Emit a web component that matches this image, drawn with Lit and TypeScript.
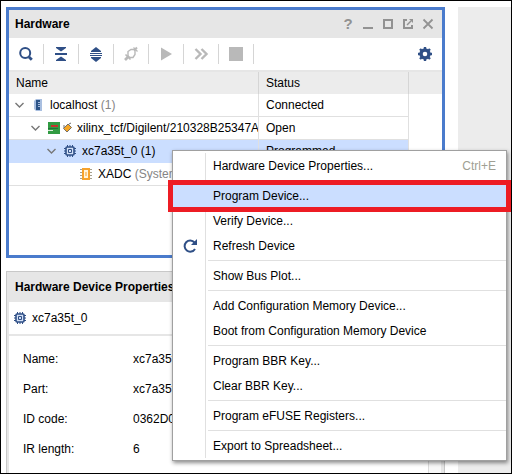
import { LitElement, html, css, svg, nothing } from "lit";
import { customElement } from "lit/decorators.js";
import { classMap } from "lit/directives/class-map.js";

const NAVY = "#2f4f86";
const GREY = "#b9b9b9";

const icon = (w: number, h: number, body: unknown) =>
  html`<svg width=${w} height=${h} viewBox="0 0 ${w} ${h}" aria-hidden="true">${body}</svg>`;

const icons = {
  search: icon(16, 16, svg`<circle cx="7.200" cy="7" r="5" fill="none" stroke=${NAVY} stroke-width="2"/><path d="M11 11l2.800 2.800" stroke=${NAVY} stroke-width="2.800"/>`),
  collapse: icon(16, 16, svg`<path d="M3 1h10v1L8 5.500 3 2zM2 7h12v2H2zM8 10.500L13 14v1H3v-1z" fill=${NAVY}/>`),
  expand: icon(16, 16, svg`<path d="M8 1l5 4v1H3V5zM2 7h12v1H2zM2 9h12v1H2zM3 11h10v1l-5 4-5-4z" fill=${NAVY}/>`),
  autoConnect: icon(16, 16, svg`<g fill="none" stroke=${GREY}><path d="M5 5.500l3-2h4v5l-2 3H6.500L5 10z" stroke-width="1.400"/><path d="M2 14l4-4" stroke-width="2.600"/><path d="M2.500 8.500l5 5" stroke-width="1.600"/><path d="M11 4.500l3-3" stroke-width="2"/><path d="M10.500 1.500l4 4" stroke-width="1.200"/></g>`),
  run: icon(16, 16, svg`<path d="M3 1.500L14 8 3 14.500z" fill=${GREY}/>`),
  fast: icon(16, 16, svg`<path d="M2.500 3l5 5-5 5M8.500 3l5 5-5 5" fill="none" stroke=${GREY} stroke-width="2.400"/>`),
  stop: icon(16, 16, svg`<path d="M1 1h14v14H1z" fill=${GREY}/>`),
  gear: icon(16, 16, svg`<circle cx="8" cy="8" r="4" fill="none" stroke=${NAVY} stroke-width="3.400"/><path d="M8 1v3M8 12v3M1 8h3M12 8h3M3 3l2 2M11 11l2 2M3 13l2-2M11 5l2-2" stroke=${NAVY} stroke-width="2.400"/>`),
  minimize: icon(12, 12, svg`<path d="M1 9h10v2H1z" fill="#929292"/>`),
  maximize: icon(12, 12, svg`<path d="M2 2h8v8H2z" fill="none" stroke="#929292" stroke-width="2"/>`),
  float: icon(12, 12, svg`<path d="M5 2H2v8h8V7" fill="none" stroke="#929292" stroke-width="2"/><path d="M7 1h4v4z" fill="#929292"/><path d="M5 7l4-4" stroke="#929292" stroke-width="1.400"/>`),
  close: icon(12, 12, svg`<path d="M1.500 1.500l9 9M10.500 1.500l-9 9" stroke="#929292" stroke-width="1.800"/>`),
  chevron: icon(13, 12, svg`<path d="M2.500 4L6.500 8l4-4" fill="none" stroke="#777" stroke-width="1.400"/>`),
  chip: icon(16, 16, svg`<path d="M5.500 2v12M8 2v12M10.500 2v12M2 5.500h12M2 8h12M2 10.500h12" stroke=${NAVY}/><rect x="4" y="4" width="8" height="8" rx="1" fill="#d3e0f6" stroke=${NAVY} stroke-width="1.600"/><path d="M6.500 6.500h3v3h-3z" fill="#d3e0f6" stroke=${NAVY}/>`),
  host: icon(16, 16, svg`<path d="M6 2h6v12H6l-2-2V4z" fill="#a9bfe0"/><path d="M6 3h4v10H6z" fill="#2c5488"/><path d="M8 5.500h2M8 7.500h2M8 9.500h2" stroke="#a9bfe0"/>`),
  board: icon(27, 16, svg`<path d="M2 2h12v12H2z" fill="#319b42"/><path d="M5 5h7v2H5z" fill="#c4322c"/><path d="M2 8h3v1H2zM5 8h7v1H5z" fill="#23703a"/><path d="M2 10h5v1H2z" fill="#d9ecd9"/><path d="M17.500 8.500L22 4l3.500 3.500L21 12z" fill="#f5a623" stroke="#777068"/><path d="M18 5v3M23 4l2-1" stroke="#6c6c6c" fill="none"/>`),
  adc: icon(16, 16, svg`<path d="M2 3.500h12M2 6.500h12M2 9.500h12M2 12.500h12" stroke="#a5a08f"/><path d="M4 2h8v12H4z" fill="#f6a22c"/><path d="M6 4h4v8H6z" fill="#fff3dc"/><path d="M7.500 6h1v4h-1z" fill="#f6a22c"/>`),
  refresh: icon(16, 16, svg`<path d="M12.500 4.500A5.600 5.600 0 1 0 13 11" fill="none" stroke=${NAVY} stroke-width="2"/><path d="M15 1v6H9z" fill=${NAVY}/>`),
};

interface TreeRow {
  level: number;
  icon: unknown;
  name: string;
  note?: string;
  status: string;
  leaf?: boolean;
  selected?: boolean;
}

const rows: TreeRow[] = [
  { level: 0, icon: icons.host, name: "localhost", note: "(1)", status: "Connected" },
  { level: 1, icon: icons.board, name: "xilinx_tcf/Digilent/210328B25347A", status: "Open" },
  { level: 2, icon: icons.chip, name: "xc7a35t_0 (1)", status: "Programmed", selected: true },
  { level: 3, icon: icons.adc, name: "XADC", note: "(System Monitor)", status: "", leaf: true },
];

interface MenuEntry {
  label: string;
  shortcut?: string;
  icon?: unknown;
  marked?: boolean;
}

const menuGroups: MenuEntry[][] = [
  [{ label: "Hardware Device Properties...", shortcut: "Ctrl+E" }],
  [
    { label: "Program Device...", marked: true },
    { label: "Verify Device..." },
    { label: "Refresh Device", icon: icons.refresh },
  ],
  [{ label: "Show Bus Plot..." }],
  [{ label: "Add Configuration Memory Device..." }, { label: "Boot from Configuration Memory Device" }],
  [{ label: "Program BBR Key..." }, { label: "Clear BBR Key..." }],
  [{ label: "Program eFUSE Registers..." }],
  [{ label: "Export to Spreadsheet..." }],
];

const shared = css`
  * { box-sizing: border-box; }
  svg { display: block; flex: none; }
  button {
    margin: 0;
    padding: 0;
    border: 0;
    background: none;
    font: inherit;
    color: inherit;
  }
  .title {
    margin: 0;
    font-size: 12px;
    font-weight: bold;
    white-space: nowrap;
  }
`;

@customElement("hardware-panel")
class HardwarePanel extends LitElement {
  static styles = [shared, css`
    :host {
      display: block;
      box-sizing: border-box;
      min-height: 251px;
      border: 3px solid #4a7bcc;
      background: #fff;
    }
    .header {
      display: flex;
      align-items: center;
      justify-content: space-between;
      height: 28px;
      padding: 0 4px 0 6px;
      background: #e6e6e6;
    }
    .window { display: flex; }
    .window button {
      display: flex;
      align-items: center;
      justify-content: center;
      width: 20px;
      height: 20px;
      color: #929292;
      font-size: 15px;
      font-weight: bold;
    }
    .toolbar {
      display: flex;
      align-items: center;
      height: 34px;
      border-bottom: 2px solid #e6e6e6;
    }
    .tool {
      display: flex;
      align-items: center;
      justify-content: center;
      width: 35px;
      height: 20px;
      border-right: 1px solid #d5d5d5;
    }
    .tool.last {
      width: 34px;
      margin-left: auto;
      border: 0;
    }
    table {
      width: 100%;
      table-layout: fixed;
      border-collapse: separate;
      border-spacing: 0;
    }
    .col-status { width: 150px; }
    .col-rest { width: 33px; }
    th, td {
      height: 23px;
      padding: 0 0 0 7px;
      border-right: 1px solid #e0e0e0;
      border-bottom: 1px solid #e0e0e0;
      overflow: hidden;
      text-align: left;
      font-weight: normal;
      white-space: nowrap;
    }
    th {
      height: 22px;
      border-bottom: 0;
      border-right-color: #d5d5d5;
      background: #ececec;
    }
    td.name { padding-left: 4px; }
    th:last-child { border-right: 0; }
    td:last-child { border: 0; }
    .selected td:not(:last-child) {
      background: #cbdeff;
      border-bottom-color: #cbdeff;
    }
    .node {
      display: flex;
      align-items: center;
      gap: 4px;
    }
    .twisty { width: 13px; height: 12px; flex: none; }
    .note { color: #858585; }
  `];

  render() {
    const tools: [string, unknown][] = [
      ["Search", icons.search],
      ["Collapse All", icons.collapse],
      ["Expand All", icons.expand],
      ["Auto Connect", icons.autoConnect],
      ["Run Trigger", icons.run],
      ["Run Trigger Immediate", icons.fast],
      ["Stop Trigger", icons.stop],
    ];
    return html`
      <div class="header">
        <h2 class="title">Hardware</h2>
        <div class="window">
          <button aria-label="Help">?</button>
          <button aria-label="Minimize">${icons.minimize}</button>
          <button aria-label="Maximize">${icons.maximize}</button>
          <button aria-label="Float">${icons.float}</button>
          <button aria-label="Close">${icons.close}</button>
        </div>
      </div>
      <div class="toolbar">
        ${tools.map(([label, glyph]) => html`<button class="tool" aria-label=${label}>${glyph}</button>`)}
        <button class="tool last" aria-label="Settings">${icons.gear}</button>
      </div>
      <table>
        <colgroup><col /><col class="col-status" /><col class="col-rest" /></colgroup>
        <thead><tr><th>Name</th><th>Status</th><th></th></tr></thead>
        <tbody>
          ${rows.map((row) => html`
            <tr class=${classMap({ selected: !!row.selected })}>
              <td class="name">
                <div class="node" style="padding-left:${row.level * 16}px">
                  ${row.leaf ? html`<span class="twisty"></span>` : html`<button class="twisty" aria-label="Collapse">${icons.chevron}</button>`}
                  ${row.icon}
                  <span>${row.name}${row.note ? html` <span class="note">${row.note}</span>` : nothing}</span>
                </div>
              </td>
              <td>${row.status}</td>
              <td></td>
            </tr>`)}
        </tbody>
      </table>
    `;
  }
}

@customElement("properties-panel")
class PropertiesPanel extends LitElement {
  static styles = [shared, css`
    :host {
      display: flex;
      flex-direction: column;
      box-sizing: border-box;
      border: 1px solid #c8c8c8;
      border-bottom: 0;
      background: #e6e6e6;
    }
    .header {
      display: flex;
      align-items: center;
      height: 30px;
      padding-left: 8px;
    }
    .body {
      flex: 1;
      display: flex;
      flex-direction: column;
      margin: 0 3px 0 2px;
      background: #fff;
    }
    .object {
      display: flex;
      align-items: center;
      gap: 4px;
      height: 34px;
      padding-left: 3px;
      border-bottom: 2px solid #e6e6e6;
    }
    .content { flex: 1; display: flex; }
    dl {
      flex: 1;
      display: grid;
      grid-template-columns: 110px 1fr;
      grid-auto-rows: 30px;
      align-items: center;
      margin: 0;
      padding: 8px 0 0 14px;
    }
    dd { margin: 0; }
    .track {
      width: 13px;
      border-left: 1px solid #dcdcdc;
      background: #f8f8f8;
    }
  `];

  render() {
    const properties = [
      ["Name:", "xc7a35t_0"],
      ["Part:", "xc7a35t"],
      ["ID code:", "0362D093"],
      ["IR length:", "6"],
    ];
    return html`
      <div class="header"><h2 class="title">Hardware Device Properties</h2></div>
      <div class="body">
        <div class="object">${icons.chip}<span>xc7a35t_0</span></div>
        <div class="content">
          <dl>${properties.map(([key, value]) => html`<dt>${key}</dt><dd>${value}</dd>`)}</dl>
          <div class="track"></div>
        </div>
      </div>
    `;
  }
}

@customElement("context-menu")
class ContextMenu extends LitElement {
  static styles = [shared, css`
    :host {
      display: block;
      box-sizing: border-box;
      padding: 2px 0;
      border: 1px solid #a0a0a0;
      background: #fff;
      box-shadow: 1px 2px 4px rgba(0, 0, 0, 0.45);
    }
    .group {
      padding-bottom: 5px;
      background: linear-gradient(#e0e0e0, #e0e0e0) 35px calc(100% - 2px) / 100% 1px no-repeat;
    }
    .group:last-child { padding-bottom: 0; background: none; }
    .list { background: linear-gradient(#e0e0e0, #e0e0e0) 32px 0 / 1px 100% no-repeat; }
    .item {
      position: relative;
      display: grid;
      grid-template-columns: 34px 1fr auto;
      align-items: center;
      width: 100%;
      height: 25px;
      padding: 0 10px 0 0;
      text-align: left;
      white-space: nowrap;
    }
    .label { grid-column: 2; padding-left: 6px; }
    .glyph { grid-column: 1; justify-self: center; }
    .shortcut { color: #a09f93; }
    .marked { background: #cbdeff; }
    .marked::after {
      content: "";
      position: absolute;
      inset: -3px -5px -4px;
      border: 5px solid #ed1c24;
      z-index: 1;
    }
  `];

  render() {
    return html`
      <div class="list" role="menu">
        ${menuGroups.map((group) => html`
          <div class="group" role="group">
            ${group.map((entry) => html`
              <button role="menuitem" class=${classMap({ item: true, marked: !!entry.marked })}>
                ${entry.icon ? html`<span class="glyph">${entry.icon}</span>` : nothing}
                <span class="label">${entry.label}</span>
                ${entry.shortcut ? html`<span class="shortcut">${entry.shortcut}</span>` : nothing}
              </button>`)}
          </div>`)}
      </div>
    `;
  }
}

@customElement("app-root")
class AppRoot extends LitElement {
  static styles = css`
    :host {
      position: relative;
      display: flex;
      gap: 13px;
      box-sizing: border-box;
      min-height: 100vh;
      padding: 6px 0 0 5px;
      border: 1px solid #000;
      background: #fff;
      color: #000;
      font: 12px/16px "Liberation Sans", Arial, sans-serif;
    }
    .dock {
      flex: 1;
      min-width: 0;
      display: flex;
      flex-direction: column;
      gap: 13px;
    }
    properties-panel { flex: 1; }
    .workspace { width: 53px; background: #ececec; }
    context-menu {
      position: absolute;
      top: 149px;
      left: 171px;
      right: 4px;
    }
  `;

  render() {
    return html`
      <div class="dock">
        <hardware-panel></hardware-panel>
        <properties-panel></properties-panel>
      </div>
      <div class="workspace"></div>
      <context-menu></context-menu>
    `;
  }
}
